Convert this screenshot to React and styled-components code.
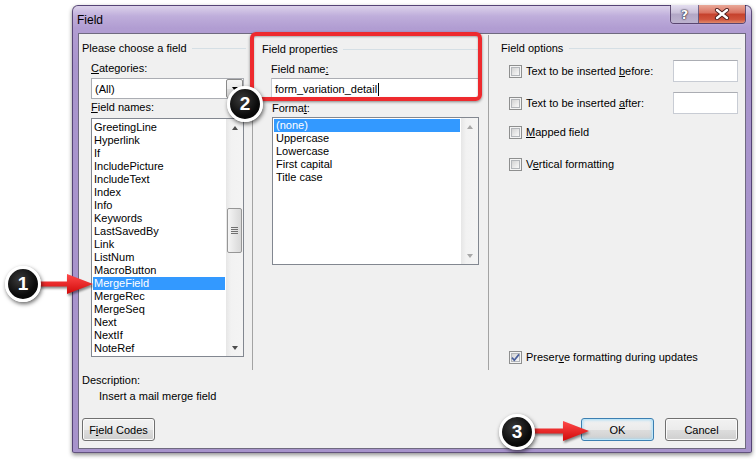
import React from 'react';
import styled, { createGlobalStyle } from 'styled-components';

const GlobalStyle = createGlobalStyle`
  html, body {
    margin: 0;
    padding: 0;
    background: #ffffff;
  }
  body {
    font-family: "Liberation Sans", Arial, sans-serif;
    font-size: 11px;
    color: #000;
  }
`;

const fieldNames = [
  'GreetingLine', 'Hyperlink', 'If', 'IncludePicture', 'IncludeText', 'Index',
  'Info', 'Keywords', 'LastSavedBy', 'Link', 'ListNum', 'MacroButton',
  'MergeField', 'MergeRec', 'MergeSeq', 'Next', 'NextIf', 'NoteRef',
];
const formats = ['(none)', 'Uppercase', 'Lowercase', 'First capital', 'Title case'];

const CheckBox = ({ checked }) => (
  <Box>
    {checked && (
      <svg width="11" height="11" viewBox="0 0 11 11">
        <path d="M2 5.6 L4.3 8.2 L9 2.4" fill="none" stroke="#4a5f9c" strokeWidth="1.7" />
      </svg>
    )}
  </Box>
);

const Arrow = ({ x, y }) => (
  <ArrowWrap $x={x} $y={y}>
    <svg width="56" height="24" viewBox="0 0 56 24">
      <defs>
        <linearGradient id={`red${x}`} x1="0" y1="0" x2="0" y2="1">
          <stop offset="0" stopColor="#ff4a4a" />
          <stop offset="1" stopColor="#d10a0a" />
        </linearGradient>
      </defs>
      <path d="M0 9.5 H29 V2 L55 12 L29 22 V14.5 H0 Z" fill={`url(#red${x})`} />
    </svg>
  </ArrowWrap>
);

const App = () => {
  return (
    <Page>
      <GlobalStyle />
      <Window>
        <TitleBar>
          <TitleText>Field</TitleText>
          <CaptionButtons>
            <HelpButton>?</HelpButton>
            <CloseButton>
              <svg width="16" height="12" viewBox="0 0 16 12">
                <path d="M3 2 L13 10 M13 2 L3 10" stroke="#4b1e1e" strokeWidth="4.2" strokeLinecap="round" />
                <path d="M3 2 L13 10 M13 2 L3 10" stroke="#ffffff" strokeWidth="2.4" strokeLinecap="round" />
              </svg>
            </CloseButton>
          </CaptionButtons>
        </TitleBar>

        <Client>
          <TopSection>
            <Column>
              <Header $left={3} $right={6}>
                Please choose a field<HeaderRule />
              </Header>
              <FieldLabel $top={4} $left={12}><u>C</u>ategories:</FieldLabel>
              <Combo $top={2} $left={12}>
                <ComboText>(All)</ComboText>
                <DropButton><DownTriangle $color="#000" /></DropButton>
              </Combo>
              <FieldLabel $top={0} $left={12}><u>F</u>ield names:</FieldLabel>
              <ListBox $top={3} $left={12} $width={153} $height={239}>
                <Items $padTop={2}>
                  {fieldNames.map((n) => (
                    <Item key={n} $selected={n === 'MergeField'} $pad={1}>{n}</Item>
                  ))}
                </Items>
                <ScrollBar>
                  <ScrollArrow><UpTriangle $color="#4d4d4d" /></ScrollArrow>
                  <Track>
                    <Thumb $top={72} $height={45} />
                  </Track>
                  <ScrollArrow><DownTriangle $color="#4d4d4d" /></ScrollArrow>
                </ScrollBar>
              </ListBox>
            </Column>

            <MiddleColumn>
              <Header $left={9} $right={7}>
                Field properties<HeaderRule />
              </Header>
              <FieldLabel $top={4} $left={18}>Field name<u>:</u></FieldLabel>
              <TextBox $top={1} $left={18} $width={208}>
                form_variation_detail<Caret />
              </TextBox>
              <FieldLabel $top={0} $left={19}>Forma<u>t</u>:</FieldLabel>
              <ListBox $top={1} $left={19} $width={207} $height={148}>
                <Items $padTop={1}>
                  {formats.map((f) => (
                    <Item key={f} $selected={f === '(none)'} $pad={2}>{f}</Item>
                  ))}
                </Items>
                <ScrollBar>
                  <ScrollArrow><UpTriangle $color="#a8a8a8" /></ScrollArrow>
                  <Track />
                  <ScrollArrow><DownTriangle $color="#a8a8a8" /></ScrollArrow>
                </ScrollBar>
              </ListBox>
            </MiddleColumn>

            <OptionsColumn>
              <Header $left={12} $right={4}>
                Field options<HeaderRule $gap={6} />
              </Header>
              <OptionRow $top={4} $height={22}>
                <CheckBox />
                <OptionText>Text to be inserted <u>b</u>efore:</OptionText>
                <SmallInput />
              </OptionRow>
              <OptionRow $top={10} $height={22}>
                <CheckBox />
                <OptionText>Text to be inserted <u>a</u>fter:</OptionText>
                <SmallInput />
              </OptionRow>
              <OptionRow $top={10} $height={16}>
                <CheckBox />
                <OptionText><u>M</u>apped field</OptionText>
              </OptionRow>
              <OptionRow $top={16} $height={16}>
                <CheckBox />
                <OptionText>V<u>e</u>rtical formatting</OptionText>
              </OptionRow>
              <OptionRow $top="auto" $height={16}>
                <CheckBox checked />
                <OptionText>Preser<u>v</u>e formatting during updates</OptionText>
              </OptionRow>
            </OptionsColumn>
          </TopSection>

          <BottomSection>
            <DescriptionBlock>
              <FieldLabel $top={2} $left={0}>Description:</FieldLabel>
              <DescriptionText>Insert a mail merge field</DescriptionText>
              <PushButton>F<u>i</u>eld Codes</PushButton>
            </DescriptionBlock>
            <ButtonRow>
              <PushButton $default>OK</PushButton>
              <PushButton>Cancel</PushButton>
            </ButtonRow>
          </BottomSection>
        </Client>
      </Window>

      <Highlight />
      <Arrow x={38} y={272} />
      <Arrow x={534} y={419} />
      <Badge $x={23} $y={284}>1</Badge>
      <Badge $x={245} $y={104}>2</Badge>
      <Badge $x={517} $y={432}>3</Badge>
    </Page>
  );
};

export default App;

const Page = styled.div`
  position: relative;
  width: 756px;
  height: 462px;
  box-sizing: border-box;
  padding: 5px 0 0 72px;
  overflow: hidden;
`;

const Window = styled.div`
  width: 680px;
  box-sizing: border-box;
  border: 1px solid rgba(58, 40, 88, 0.75);
  border-radius: 6px 6px 2px 2px;
  padding: 0 5px 3px;
  background: linear-gradient(180deg, #dcd2ea 0px, #bfaedb 10px, #b19dd2 22px, #a995cd 60px, #a793cb 100%);
  box-shadow: 0 2px 4px rgba(0, 0, 0, 0.45);
  display: flex;
  flex-direction: column;
`;

const TitleBar = styled.div`
  height: 27px;
  display: flex;
  justify-content: space-between;
  align-items: flex-start;
`;

const TitleText = styled.div`
  margin: 6px 0 0 -1px;
  font-size: 12px;
  line-height: 16px;
  color: #000;
`;

const CaptionButtons = styled.div`
  display: flex;
  margin-top: -1px;
  border: 1px solid rgba(50, 30, 70, 0.7);
  border-top: none;
  border-radius: 0 0 4px 4px;
  overflow: hidden;
  box-shadow: 0 0 1px rgba(255, 255, 255, 0.7);
`;

const HelpButton = styled.div`
  width: 27px;
  height: 18px;
  display: flex;
  align-items: center;
  justify-content: center;
  border-right: 1px solid rgba(50, 30, 70, 0.6);
  background: linear-gradient(180deg, #e4def0 0%, #c8bfd8 45%, #b2a7c6 50%, #bdb3cf 100%);
  color: #fff;
  font: bold 13px "DejaVu Sans", sans-serif;
  text-shadow: 0 0 1px #2f2a3c, 0 0 1px #2f2a3c, 0 0 2px #2f2a3c;
`;

const CloseButton = styled.div`
  width: 46px;
  height: 18px;
  display: flex;
  align-items: center;
  justify-content: center;
  background: linear-gradient(180deg, #e9a999 0%, #d9705f 45%, #c5412c 50%, #d0533c 80%, #e08a6c 100%);
`;

const Client = styled.div`
  height: 416px;
  box-sizing: border-box;
  border: 1px solid #6f6a80;
  background: #f0f0f0;
  display: flex;
  flex-direction: column;
`;

const TopSection = styled.div`
  height: 336px;
  display: grid;
  grid-template-columns: 173px 237px 256px;
`;

const Column = styled.div`
  display: flex;
  flex-direction: column;
  align-items: flex-start;
  min-width: 0;
`;

const MiddleColumn = styled(Column)`
  border-left: 1px solid #a3a3a3;
  border-right: 1px solid #a3a3a3;
  margin-top: 1px;
`;

const OptionsColumn = styled(Column)`
  align-items: stretch;
  padding-bottom: 5px;
`;

const Header = styled.div`
  align-self: stretch;
  display: flex;
  align-items: center;
  height: 16px;
  margin-top: 6px;
  padding: 0 ${(p) => p.$right}px 0 ${(p) => p.$left}px;
  white-space: nowrap;
  color: #000;
`;

const HeaderRule = styled.span`
  flex: 1;
  height: 1px;
  margin-left: ${(p) => p.$gap ?? 5}px;
  background: #d5dfe5;
`;

const FieldLabel = styled.div`
  height: 16px;
  line-height: 16px;
  margin: ${(p) => p.$top}px 0 0 ${(p) => p.$left}px;
  white-space: nowrap;
`;

const Combo = styled.div`
  width: 153px;
  height: 21px;
  box-sizing: border-box;
  margin: ${(p) => p.$top}px 0 0 ${(p) => p.$left}px;
  border: 1px solid #abadb3;
  background: #fff;
  display: flex;
  align-items: center;
  justify-content: space-between;
`;

const ComboText = styled.span`
  padding-left: 3px;
  line-height: 16px;
`;

const DropButton = styled.div`
  width: 17px;
  height: 19px;
  box-sizing: border-box;
  border: 1px solid #8a8a8a;
  border-radius: 2px;
  background: linear-gradient(180deg, #f4f4f4 0%, #ebebeb 50%, #dcdcdc 51%, #cfcfcf 100%);
  display: flex;
  align-items: center;
  justify-content: center;
`;

const DownTriangle = styled.span`
  width: 0;
  height: 0;
  border-left: 3.5px solid transparent;
  border-right: 3.5px solid transparent;
  border-top: 4px solid ${(p) => p.$color};
`;

const UpTriangle = styled.span`
  width: 0;
  height: 0;
  border-left: 3.5px solid transparent;
  border-right: 3.5px solid transparent;
  border-bottom: 4px solid ${(p) => p.$color};
`;

const ListBox = styled.div`
  width: ${(p) => p.$width}px;
  height: ${(p) => p.$height}px;
  box-sizing: border-box;
  margin: ${(p) => p.$top}px 0 0 ${(p) => p.$left}px;
  border: 1px solid #828790;
  background: #fff;
  display: flex;
`;

const Items = styled.div`
  flex: 1;
  min-width: 0;
  padding-top: ${(p) => p.$padTop}px;
  overflow: hidden;
`;

const Item = styled.div`
  height: 13px;
  line-height: 13px;
  margin: 0 1px;
  padding-left: ${(p) => p.$pad}px;
  white-space: nowrap;
  color: ${(p) => (p.$selected ? '#fff' : '#000')};
  background: ${(p) => (p.$selected ? '#3399ff' : 'transparent')};
`;

const ScrollBar = styled.div`
  width: 17px;
  display: flex;
  flex-direction: column;
  background: linear-gradient(90deg, #e6e6e6 0%, #f2f2f2 30%, #f4f4f4 100%);
`;

const ScrollArrow = styled.div`
  height: 17px;
  display: flex;
  align-items: center;
  justify-content: center;
`;

const Track = styled.div`
  flex: 1;
  position: relative;
`;

const Thumb = styled.div`
  margin: ${(p) => p.$top}px 1px 0;
  height: ${(p) => p.$height}px;
  box-sizing: border-box;
  border: 1px solid #969696;
  border-radius: 2px;
  background: linear-gradient(90deg, #f5f5f5 0%, #e6e6e6 50%, #d8d8d8 100%);
  display: flex;
  align-items: center;
  justify-content: center;

  &::after {
    content: '';
    width: 7px;
    height: 7px;
    background: repeating-linear-gradient(180deg, #707070 0 1px, transparent 1px 2px);
  }
`;

const TextBox = styled.div`
  width: ${(p) => p.$width}px;
  height: 22px;
  box-sizing: border-box;
  margin: ${(p) => p.$top}px 0 0 ${(p) => p.$left}px;
  padding-left: 3px;
  border: 1px solid #c8ccd4;
  border-top-color: #abadb3;
  background: #fff;
  display: flex;
  align-items: center;
  line-height: 16px;
`;

const Caret = styled.span`
  width: 1px;
  height: 13px;
  margin-left: 1px;
  background: #000;
`;

const OptionRow = styled.div`
  display: flex;
  align-items: center;
  height: ${(p) => p.$height}px;
  margin-top: ${(p) => (p.$top === 'auto' ? 'auto' : `${p.$top}px`)};
  padding: 0 7px 0 20px;
`;

const Box = styled.span`
  position: relative;
  flex: none;
  width: 13px;
  height: 13px;
  box-sizing: border-box;
  border: 1px solid #8e8f8f;
  background: #f4f4f4;
  display: flex;
  align-items: center;
  justify-content: center;

  &::before {
    content: '';
    position: absolute;
    inset: 1px;
    border: 1px solid #b3b6ba;
    background: linear-gradient(135deg, #d3d3d3 0%, #eeeeee 70%, #f7f7f7 100%);
  }

  svg {
    position: relative;
    z-index: 1;
  }
`;

const OptionText = styled.span`
  flex: 1;
  margin-left: 4px;
  white-space: nowrap;
  line-height: 16px;
`;

const SmallInput = styled.span`
  width: 65px;
  height: 22px;
  box-sizing: border-box;
  border: 1px solid #c8ccd4;
  border-top-color: #abadb3;
  background: #fff;
`;

const BottomSection = styled.div`
  flex: 1;
  display: flex;
  justify-content: space-between;
  padding: 0 7px 7px 3px;
`;

const DescriptionBlock = styled.div`
  display: flex;
  flex-direction: column;
  align-items: flex-start;
`;

const DescriptionText = styled.div`
  height: 16px;
  line-height: 16px;
  padding-left: 17px;
  margin-bottom: auto;
`;

const ButtonRow = styled.div`
  display: flex;
  align-self: flex-end;
  gap: 11px;
`;

const PushButton = styled.div`
  width: 73px;
  height: 23px;
  box-sizing: border-box;
  border: 1px solid ${(p) => (p.$default ? '#3c7fb1' : '#707070')};
  border-radius: 3px;
  background: linear-gradient(180deg, #f2f2f2 0%, #ebebeb 50%, #dddddd 51%, #cfcfcf 100%);
  box-shadow: ${(p) =>
    p.$default
      ? 'inset 0 0 0 1px #bfe6f8, inset 0 0 3px 1px #9fd7f3'
      : 'inset 0 0 0 1px #fbfbfb'};
  display: flex;
  align-items: center;
  justify-content: center;
  line-height: 16px;
  white-space: nowrap;
`;

const Highlight = styled.div`
  position: absolute;
  left: 250px;
  top: 32px;
  width: 232px;
  height: 69px;
  box-sizing: border-box;
  border: 4px solid #ee2a2e;
  border-radius: 6px;
  box-shadow: 0 1px 3px rgba(0, 0, 0, 0.45), inset 0 1px 2px rgba(0, 0, 0, 0.3);
`;

const ArrowWrap = styled.div`
  position: absolute;
  left: ${(p) => p.$x}px;
  top: ${(p) => p.$y}px;
  width: 56px;
  height: 24px;
  filter: drop-shadow(1px 2px 1px rgba(0, 0, 0, 0.45));

  svg {
    display: block;
  }
`;

const Badge = styled.div`
  position: absolute;
  left: ${(p) => p.$x - 18}px;
  top: ${(p) => p.$y - 18}px;
  width: 36px;
  height: 36px;
  box-sizing: border-box;
  border: 3px solid #ffffff;
  border-radius: 50%;
  background: radial-gradient(circle at 40% 35%, #3a3a3a 0%, #0b0b0b 60%, #000 100%);
  box-shadow: 1px 2px 4px rgba(0, 0, 0, 0.6);
  display: flex;
  align-items: center;
  justify-content: center;
  color: #fff;
  font: bold 19px "Liberation Sans", Arial, sans-serif;
`;
